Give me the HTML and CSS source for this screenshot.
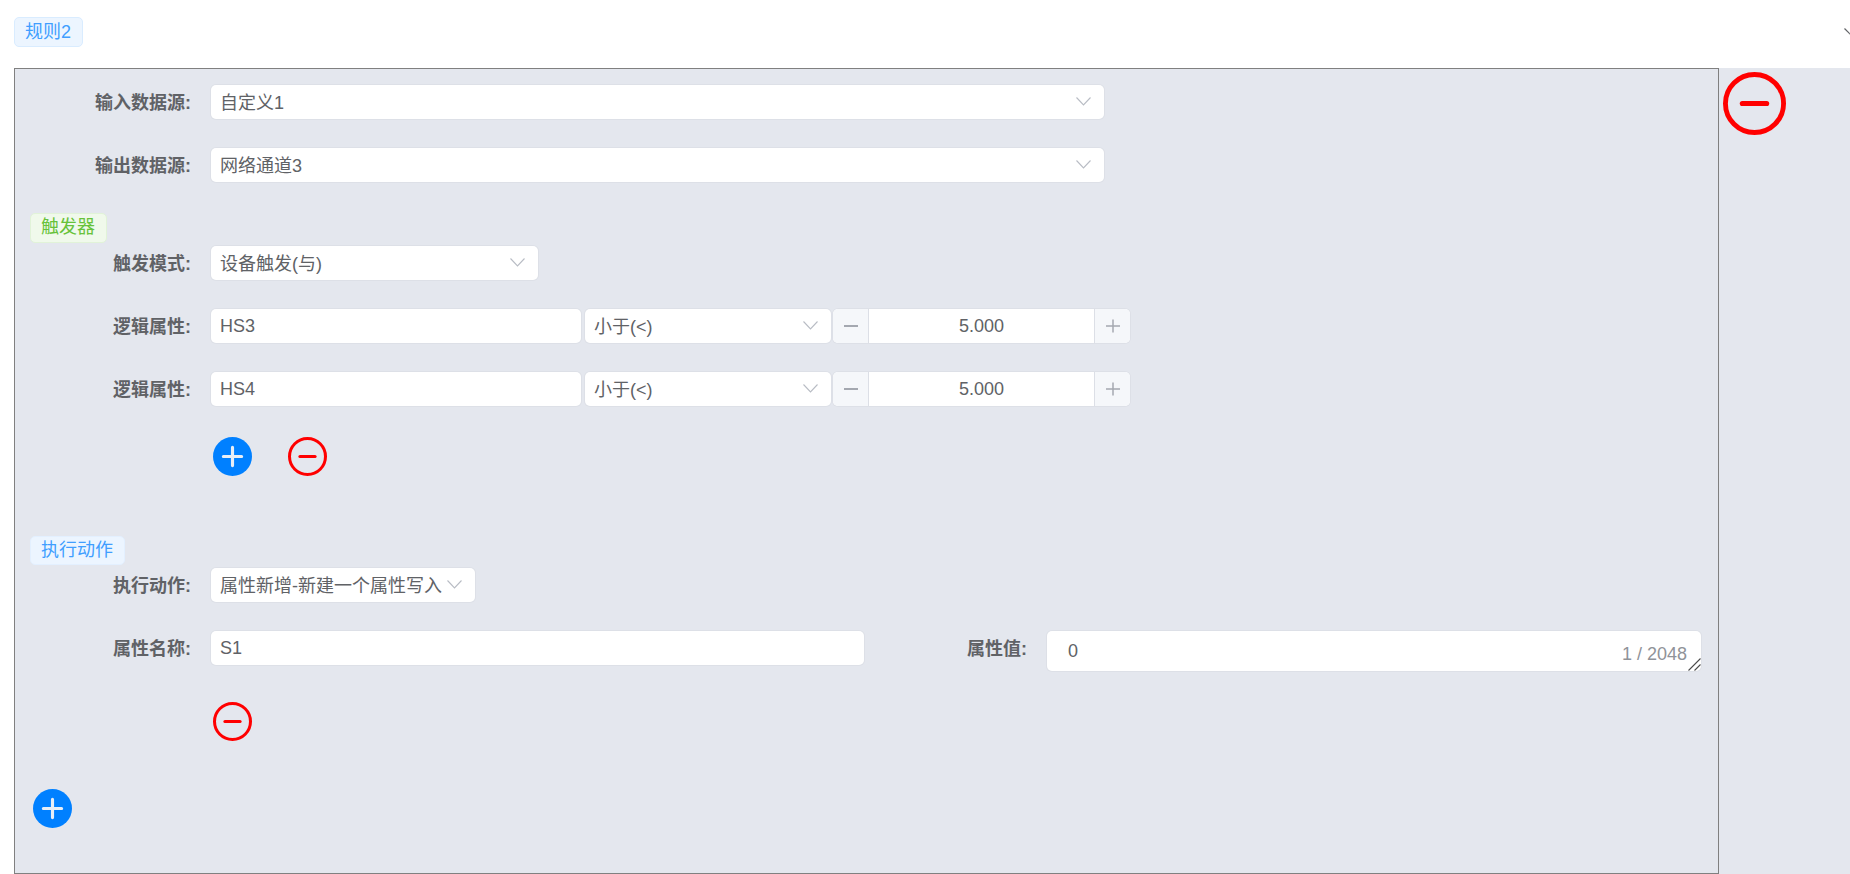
FILE: index.html
```html
<!DOCTYPE html>
<html lang="zh-CN">
<head>
<meta charset="utf-8">
<title>规则2</title>
<link rel="stylesheet" href="styles.css">
</head>
<body>
<header class="rule-head">
  <span class="tag tag-blue tag-rule">规则2</span>
  <svg class="head-arrow" viewBox="0 0 6 7" width="6" height="7"><path d="M0.5 0.5L7 7" fill="none" stroke="#606266" stroke-width="1.2"/></svg>
</header>
<main class="rule-body">
  <section class="panel">
    <div class="row row-first">
      <div class="label">输入数据源:</div>
      <div class="field select w-full"><span>自定义1</span><svg class="chev" viewBox="0 0 15 9" width="15" height="9"><path d="M0.5 0.5L7.5 8L14.5 0.5" fill="none" stroke="#b8bcc4" stroke-width="1.1"/></svg></div>
    </div>
    <div class="row">
      <div class="label">输出数据源:</div>
      <div class="field select w-full"><span>网络通道3</span><svg class="chev" viewBox="0 0 15 9" width="15" height="9"><path d="M0.5 0.5L7.5 8L14.5 0.5" fill="none" stroke="#b8bcc4" stroke-width="1.1"/></svg></div>
    </div>

    <div class="section-tag section-trigger"><span class="tag tag-green">触发器</span></div>
    <div class="row row-tight">
      <div class="label">触发模式:</div>
      <div class="field select w-mode"><span>设备触发(与)</span><svg class="chev" viewBox="0 0 15 9" width="15" height="9"><path d="M0.5 0.5L7.5 8L14.5 0.5" fill="none" stroke="#b8bcc4" stroke-width="1.1"/></svg></div>
    </div>
    <div class="row">
      <div class="label">逻辑属性:</div>
      <div class="logic">
        <div class="field w-prop">HS3</div>
        <div class="field select w-op"><span>小于(&lt;)</span><svg class="chev" viewBox="0 0 15 9" width="15" height="9"><path d="M0.5 0.5L7.5 8L14.5 0.5" fill="none" stroke="#b8bcc4" stroke-width="1.1"/></svg></div>
        <div class="stepper">
          <span class="step step-minus"><svg viewBox="0 0 14 14" width="14" height="14"><path d="M0 7H14" stroke="#a4a8b0" stroke-width="1.8"/></svg></span>
          <span class="step-value">5.000</span>
          <span class="step step-plus"><svg viewBox="0 0 14 14" width="14" height="14"><path d="M0 7H14M7 0.5V13.5" stroke="#a4a8b0" stroke-width="1.5"/></svg></span>
        </div>
      </div>
    </div>
    <div class="row">
      <div class="label">逻辑属性:</div>
      <div class="logic">
        <div class="field w-prop">HS4</div>
        <div class="field select w-op"><span>小于(&lt;)</span><svg class="chev" viewBox="0 0 15 9" width="15" height="9"><path d="M0.5 0.5L7.5 8L14.5 0.5" fill="none" stroke="#b8bcc4" stroke-width="1.1"/></svg></div>
        <div class="stepper">
          <span class="step step-minus"><svg viewBox="0 0 14 14" width="14" height="14"><path d="M0 7H14" stroke="#a4a8b0" stroke-width="1.8"/></svg></span>
          <span class="step-value">5.000</span>
          <span class="step step-plus"><svg viewBox="0 0 14 14" width="14" height="14"><path d="M0 7H14M7 0.5V13.5" stroke="#a4a8b0" stroke-width="1.5"/></svg></span>
        </div>
      </div>
    </div>
    <div class="actions actions-logic">
      <svg class="icon" viewBox="0 0 62 62" width="39" height="39"><circle cx="31" cy="31" r="31" fill="#0080ff"/><path d="M31 16.5V45.5M16.5 31H45.5" stroke="#e8eef6" stroke-width="5" stroke-linecap="round"/></svg>
      <svg class="icon" viewBox="0 0 62 62" width="39" height="39"><circle cx="31" cy="31" r="28.6" fill="none" stroke="#ff0000" stroke-width="4.8"/><path d="M19 31H43" stroke="#ff0000" stroke-width="5" stroke-linecap="round"/></svg>
    </div>

    <div class="section-tag section-action"><span class="tag tag-blue">执行动作</span></div>
    <div class="row row-tight">
      <div class="label">执行动作:</div>
      <div class="field select w-action"><span>属性新增-新建一个属性写入</span><svg class="chev" viewBox="0 0 15 9" width="15" height="9"><path d="M0.5 0.5L7.5 8L14.5 0.5" fill="none" stroke="#b8bcc4" stroke-width="1.1"/></svg></div>
    </div>
    <div class="row row-attr">
      <div class="label">属性名称:</div>
      <div class="field w-name">S1</div>
      <div class="label label-value">属性值:</div>
      <div class="textarea-wrap">
        <textarea class="textarea" rows="1">0</textarea>
        <span class="counter">1 / 2048</span>
        <svg class="grip" viewBox="0 0 13 13" width="13" height="13"><path d="M0.5 12.5L12.5 0.5M6.5 12.5L12.5 6.5" fill="none" stroke="#4a4a4a" stroke-width="1.1"/></svg>
      </div>
    </div>
    <div class="actions actions-attr">
      <svg class="icon" viewBox="0 0 62 62" width="39" height="39"><circle cx="31" cy="31" r="28.6" fill="none" stroke="#ff0000" stroke-width="4.8"/><path d="M19 31H43" stroke="#ff0000" stroke-width="5" stroke-linecap="round"/></svg>
    </div>
    <div class="actions actions-bottom">
      <svg class="icon" viewBox="0 0 62 62" width="39" height="39"><circle cx="31" cy="31" r="31" fill="#0080ff"/><path d="M31 16.5V45.5M16.5 31H45.5" stroke="#e8eef6" stroke-width="5" stroke-linecap="round"/></svg>
    </div>
  </section>
  <aside class="side">
    <svg class="icon" viewBox="0 0 62 62" width="63" height="63"><circle cx="31" cy="31" r="28.6" fill="none" stroke="#ff0000" stroke-width="4.8"/><path d="M19 31H43" stroke="#ff0000" stroke-width="5" stroke-linecap="round"/></svg>
  </aside>
</main>
</body>
</html>
```

FILE: styles.css
```css
* { box-sizing: border-box; }
html, body { margin: 0; height: 874px; overflow: hidden; background: #fff; }
body {
  font-family: "Liberation Sans", "Noto Sans CJK SC", sans-serif;
  font-size: 18px;
  color: #606266;
}
.rule-head {
  height: 68px;
  padding: 17px 0 0 14px;
  display: flex;
  justify-content: space-between;
  align-items: flex-start;
}
.head-arrow { margin-top: 11px; display: block; }
.tag {
  display: inline-flex;
  align-items: center;
  height: 30px;
  padding: 0 10px 2px;
  border: 1px solid;
  border-radius: 5px;
  line-height: 1;
}
.tag-blue { background: #ecf5ff; border-color: #d9ecff; color: #409eff; }
.tag-green { background: #f0f9eb; border-color: #e1f3d8; color: #67c23a; }
.tag-rule { width: 69px; padding-bottom: 0; }
.rule-body {
  margin-left: 14px;
  height: 806px;
  display: flex;
  background: #e4e7ee;
}
.panel {
  width: 1705px;
  height: 806px;
  border: 1px solid #808080;
}
.side { flex: 1; padding: 4px 0 0 4px; }
.icon { display: block; }
.row {
  display: flex;
  align-items: flex-start;
  margin-top: 29px;
}
.row-first { margin-top: 16px; }
.row-tight { margin-top: 3px; }
.label {
  width: 176px;
  height: 34px;
  padding-bottom: 2px;
  margin-right: 20px;
  flex: none;
  display: flex;
  align-items: center;
  justify-content: flex-end;
  font-weight: 700;
  white-space: nowrap;
}
.field {
  height: 34px;
  flex: none;
  display: flex;
  align-items: center;
  padding: 0 9px;
  background: #fff;
  box-shadow: 0 0 0 1px #dde0e7;
  border-radius: 5px;
  white-space: nowrap;
}
.select { justify-content: space-between; padding-right: 13px; padding-bottom: 2px; }
.chev { display: block; flex: none; }
.w-full { width: 893px; }
.w-mode { width: 327px; }
.w-prop { width: 370px; }
.w-op { width: 246px; margin-left: 4px; }
.w-action { width: 264px; }
.w-name { width: 653px; }
.logic { display: flex; align-items: flex-start; }
.stepper {
  width: 297px;
  height: 34px;
  margin-left: 2px;
  display: flex;
  background: #fff;
  box-shadow: 0 0 0 1px #dde0e7;
  border-radius: 5px;
  overflow: hidden;
}
.step {
  width: 36px;
  flex: none;
  display: flex;
  align-items: center;
  justify-content: center;
  background: #f5f7fa;
}
.step-minus { border-right: 1px solid #dcdfe6; }
.step-plus { border-left: 1px solid #dcdfe6; }
.step-value { flex: 1; text-align: center; line-height: 34px; }
.section-tag { padding-left: 15px; }
.section-trigger { margin-top: 31px; height: 30px; }
.section-action { margin-top: 60px; height: 29px; }
.section-action .tag { height: 29px; width: 95px; border-color: #e3f0ff; }
.section-trigger .tag { width: 77px; }
.actions { display: flex; gap: 36px; padding-left: 198px; }
.actions-logic { margin-top: 31px; }
.row-attr { margin-top: 29px; height: 40px; }
.label-value { width: 163px; }
.textarea-wrap { position: relative; width: 654px; height: 40px; }
.textarea {
  display: block;
  width: 100%;
  height: 40px;
  padding: 7px 21px;
  font: inherit;
  line-height: 26px;
  color: #606266;
  background: #fff;
  border: 0;
  box-shadow: 0 0 0 1px #dde0e7;
  border-radius: 5px;
  outline: none;
  overflow: hidden;
  resize: none;
}
.counter {
  position: absolute;
  right: 14px;
  bottom: 6px;
  line-height: 22px;
  color: #909399;
}
.grip { position: absolute; right: 0; bottom: 0; display: block; }
.actions-attr { margin-top: 31px; }
.actions-bottom { margin-top: 48px; padding-left: 18px; }
```
